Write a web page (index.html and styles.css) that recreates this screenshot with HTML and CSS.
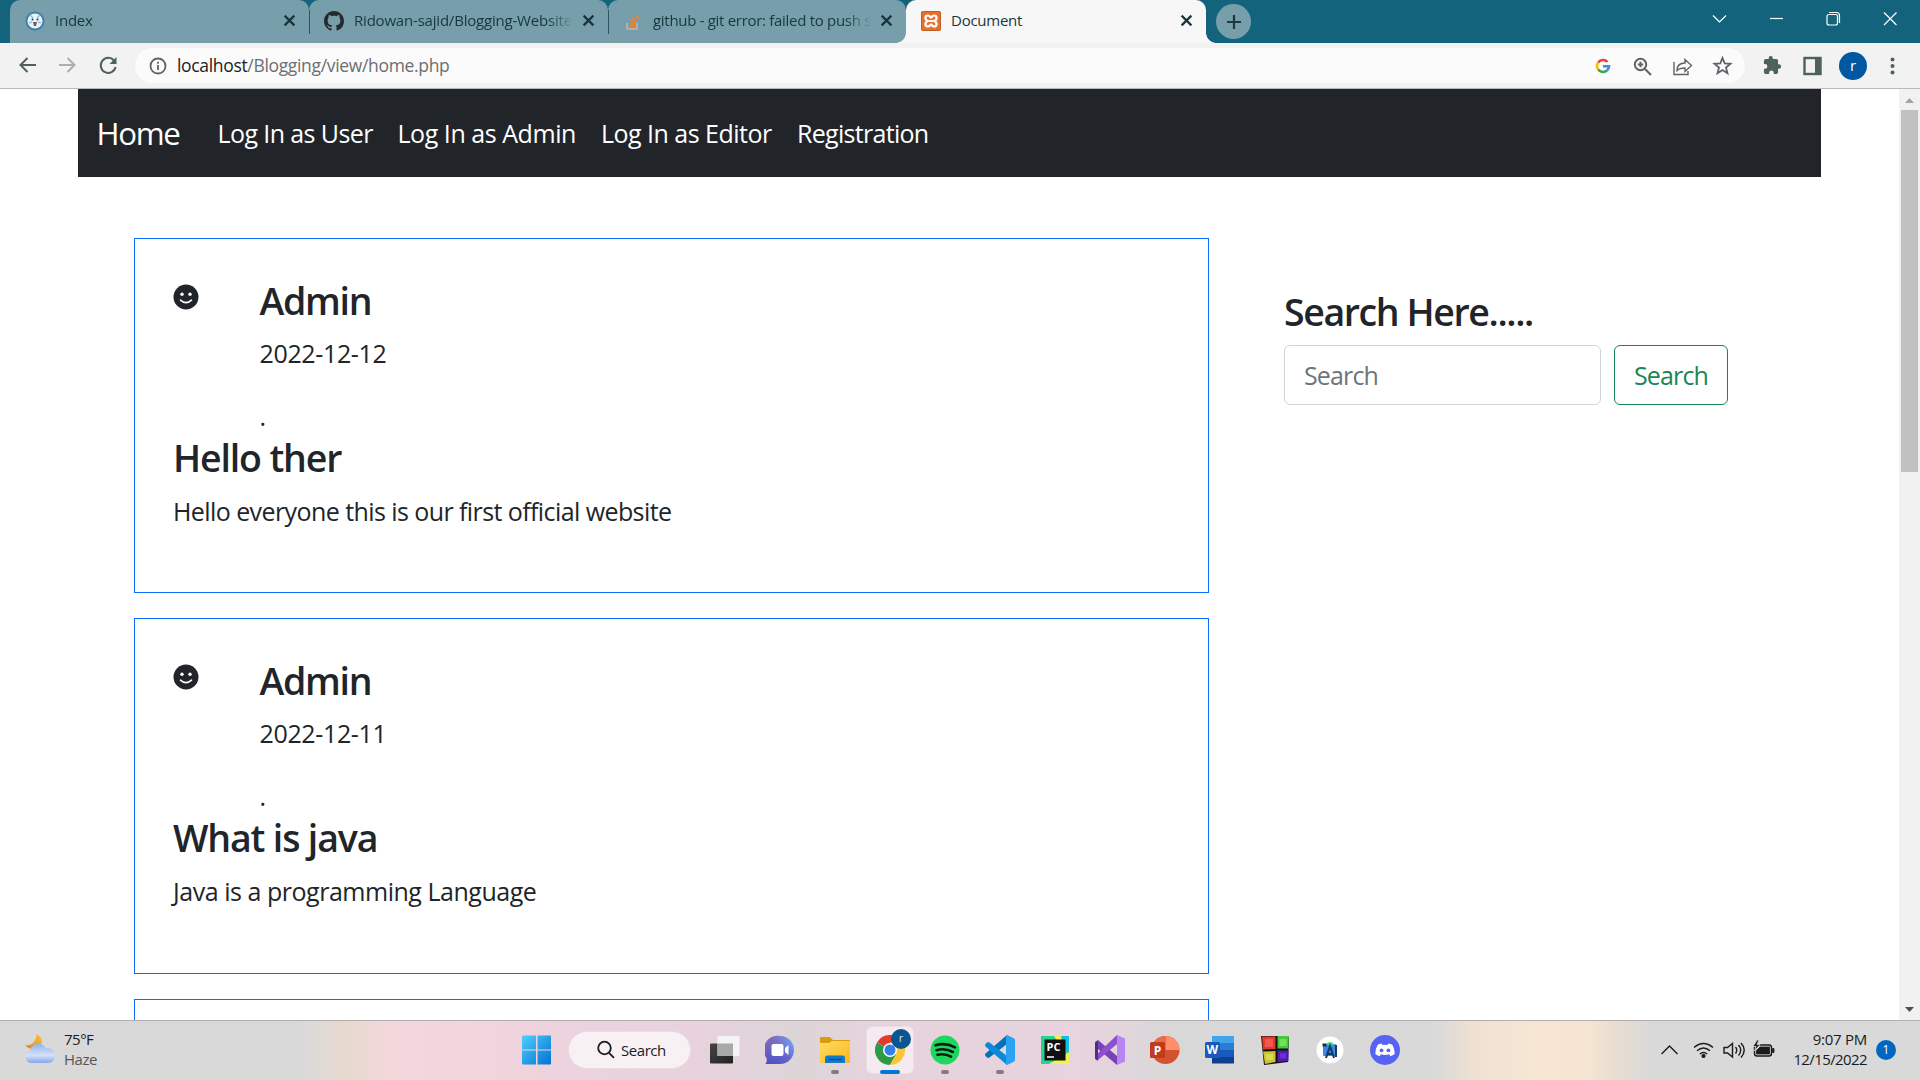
FILE: index.html
```html
<!DOCTYPE html>
<html lang="en">
<head>
<meta charset="utf-8">
<title>Document</title>
<link rel="stylesheet" href="styles.css">
</head>
<body>
<div class="screen">
  <div class="tabstrip">
    <div class="tab tab-first">
      <svg class="favicon" viewBox="0 0 20 20"><circle cx="10" cy="10" r="9.5" fill="#3d7fa8"/><circle cx="10" cy="10" r="7.6" fill="#e8f4fb"/><path d="M5 4l3 3M15 4l-3 3M4 12l3-1M16 12l-3-1" stroke="#8fc4e0" stroke-width="1.5"/><circle cx="7.5" cy="8.5" r="1" fill="#333"/><circle cx="12.5" cy="8.5" r="1" fill="#333"/><path d="M8 11h4l-1 4H9z" fill="#6d5a55"/></svg>
      <span class="tab-title fade t-index">Index</span>
      <svg class="tab-x" viewBox="0 0 12 12"><path d="M1.500 1.500l9 9M10.500 1.500l-9 9"/></svg>
    </div>
    <div class="tab tab-sep">
      <svg class="favicon" viewBox="0 0 16 16"><path fill="#24292f" d="M8 0C3.580 0 0 3.580 0 8c0 3.540 2.290 6.530 5.470 7.590.4.070.55-.17.55-.38 0-.19-.01-.82-.01-1.490-2.010.37-2.530-.49-2.690-.94-.09-.23-.48-.94-.82-1.130-.28-.15-.68-.52-.01-.53.63-.01 1.080.58 1.230.82.720 1.210 1.870.87 2.330.66.070-.52.280-.87.510-1.070-1.780-.2-3.640-.89-3.640-3.950 0-.87.310-1.590.82-2.150-.08-.2-.36-1.020.08-2.120 0 0 .67-.21 2.200.82.640-.18 1.320-.27 2-.27s1.360.09 2 .27c1.530-1.040 2.200-.82 2.200-.82.440 1.100.16 1.920.08 2.120.51.560.82 1.270.82 2.150 0 3.070-1.870 3.750-3.650 3.950.29.250.54.730.54 1.480 0 1.070-.01 1.930-.01 2.200 0 .21.150.46.550.38A8.010 8.010 0 0016 8c0-4.420-3.580-8-8-8z"/></svg>
      <span class="tab-title fade t-repo">Ridowan-sajid/Blogging-Website</span>
      <svg class="tab-x" viewBox="0 0 12 12"><path d="M1.500 1.500l9 9M10.500 1.500l-9 9"/></svg>
    </div>
    <div class="tab tab-sep">
      <svg class="favicon" viewBox="0 0 20 20" fill="none"><path d="M4 12v6h10v-6" stroke="#c3b6ae" stroke-width="1.500"/><path d="M6 15.500h6M6.200 12.500l6 1.200M7 9.300l5.600 2.600M9 6l4.600 4M12 3.500l3.200 5" stroke="#f48024" stroke-width="1.600"/></svg>
      <span class="tab-title fade t-git">github - git error: failed to push s</span>
      <svg class="tab-x" viewBox="0 0 12 12"><path d="M1.500 1.500l9 9M10.500 1.500l-9 9"/></svg>
    </div>
    <div class="tab tab-active">
      <svg class="favicon" viewBox="0 0 20 20"><rect width="20" height="20" rx="2" fill="#e8702a"/><rect x=".5" y=".5" width="19" height="19" rx="2" fill="none" stroke="#b9602a"/><path d="M7.500 10C3 9 4 4.500 7 4.500c2 0 2 2 3 2s1-2 3-2c3 0 4 4.500-.5 5.500 4.500 1 3.500 5.500.5 5.500-2 0-2-2-3-2s-1 2-3 2c-3 0-4-4.500.5-5.500z" fill="none" stroke="#fff" stroke-width="2.200"/><path d="M7.500 10h5" stroke="#fff" stroke-width="2"/></svg>
      <span class="tab-title t-doc">Document</span>
      <svg class="tab-x" viewBox="0 0 12 12"><path d="M1.500 1.500l9 9M10.500 1.500l-9 9"/></svg>
    </div>
    <div class="newtab"><svg width="18" height="18" viewBox="0 0 18 18"><path d="M9 2v14M2 9h14" stroke="#1d3b3f" stroke-width="2.200"/></svg></div>
    <div class="winctl">
      <svg width="57" height="37" viewBox="0 0 57 37"><path d="M22 15.500l6.500 6.500 6.500-6.500"/></svg>
      <svg width="57" height="37" viewBox="0 0 57 37"><path d="M22 18.500h13"/></svg>
      <svg width="57" height="37" viewBox="0 0 57 37"><rect x="22" y="14.500" width="10.500" height="10.500" rx="2"/><path d="M24 12.500h7.500q3 0 3 3V23"/></svg>
      <svg width="57" height="37" viewBox="0 0 57 37"><path d="M22 12.500l12.500 12.500M34.500 12.500L22 25"/></svg>
    </div>
  </div>

  <div class="toolbar">
    <div class="navbtns">
      <svg width="40" height="24" viewBox="0 0 40 24"><path d="M29 12H14M20.500 5l-7 7 7 7"/></svg>
      <svg class="dim" width="40" height="24" viewBox="0 0 40 24"><path d="M12 12h15M20.500 5l7 7-7 7"/></svg>
      <svg width="40" height="24" viewBox="0 0 40 24"><path d="M27 7.500A7.500 7.500 0 1 0 28.600 14"/><path d="M29.500 4v7h-7z" fill="#4c625a" stroke="none"/></svg>
    </div>
    <div class="omnibox">
      <svg class="info" width="18" height="18" viewBox="0 0 18 18"><circle cx="9" cy="9" r="7.500"/><path d="M9 8v5M9 4.800v2"/></svg>
      <span class="url">localhost<span class="path">/Blogging/view/home.php</span></span>
      <div class="omni-icons">
        <svg width="40" height="24" viewBox="0 0 40 24" class="glogo"><path stroke="#ea4335" d="M15.200 8.500A6 6 0 0 1 24.500 8"/><path stroke="#fbbc05" d="M15.200 8.500a6 6 0 0 0 0 7"/><path stroke="#34a853" d="M15.200 15.500a6 6 0 0 0 8.800 1"/><path stroke="#4285f4" d="M24 16.500a6 6 0 0 0 2-4.200h-6"/></svg>
        <svg width="40" height="24" viewBox="0 0 40 24"><circle cx="17.500" cy="10.500" r="5.700"/><path d="M22 15l6 6M14.800 10.500h5.400M17.500 7.800v5.400"/></svg>
        <svg width="40" height="24" viewBox="0 0 40 24" class="thin"><path d="M11 8v12.500h14V17M14 16.500c0-5 3-7.500 8-7.500V5.500l6.500 6-6.500 6V14c-4 0-6 .5-8 2.500z"/></svg>
        <svg width="40" height="24" viewBox="0 0 40 24"><path stroke-width="1.800" d="M19.500 4l2.200 5.400 5.800.4-4.500 3.700 1.500 5.700-5-3.100-5 3.100 1.500-5.700-4.500-3.700 5.800-.4z"/></svg>
      </div>
    </div>
    <div class="ext">
      <svg width="40" height="24" viewBox="0 0 24 24"><path fill="#4c625a" d="M19 11h-1V7c0-1-.9-2-2-2h-4V3.800a2.300 2.300 0 0 0-4.600 0V5H4a2 2 0 0 0-2 2v3.800h1.200a2.700 2.700 0 0 1 0 5.400H2V20c0 1.100.9 2 2 2h3.800v-1.200a2.700 2.700 0 0 1 5.400 0V22H16c1.100 0 2-.9 2-2v-4h1a2.500 2.500 0 0 0 0-5z" transform="translate(2.200 .6) scale(.88)"/></svg>
      <svg width="40" height="24" viewBox="0 0 40 24"><rect x="12.500" y="4" width="16" height="16" fill="none" stroke="#4c625a" stroke-width="2.400"/><path d="M23 4h5.500v16H23z" fill="#4c625a"/></svg>
      <div class="avatar">r</div>
      <svg width="38" height="24" viewBox="0 0 38 24"><g fill="#4c625a"><circle cx="19.500" cy="5.500" r="2"/><circle cx="19.500" cy="12" r="2"/><circle cx="19.500" cy="18.500" r="2"/></g></svg>
    </div>
  </div>

  <div class="viewport">
    <div class="page">
      <nav class="navbar">
        <span class="brand">Home</span>
        <span class="link l1">Log In as User</span>
        <span class="link l2">Log In as Admin</span>
        <span class="link l3">Log In as Editor</span>
        <span class="link l4">Registration</span>
      </nav>
      <div class="columns">
        <main class="posts">
          <article class="card">
            <div class="author">
              <svg class="smile" viewBox="0 0 26 26"><circle cx="13" cy="13" r="12.500" fill="#212529"/><circle cx="9" cy="10.300" r="1.700" fill="#fff"/><circle cx="17" cy="10.300" r="1.700" fill="#fff"/><path d="M7.500 16.200q5.500 5 11 0" fill="none" stroke="#fff" stroke-width="1.600" stroke-linecap="round"/></svg>
              <div><h4 class="h-admin">Admin</h4><p class="date">2022-12-12</p><p class="dot">.</p></div>
            </div>
            <h4 class="h-post">Hello ther</h4>
            <p class="p-hello">Hello everyone this is our first official website</p>
          </article>
          <article class="card card-tall">
            <div class="author">
              <svg class="smile" viewBox="0 0 26 26"><circle cx="13" cy="13" r="12.500" fill="#212529"/><circle cx="9" cy="10.300" r="1.700" fill="#fff"/><circle cx="17" cy="10.300" r="1.700" fill="#fff"/><path d="M7.500 16.200q5.500 5 11 0" fill="none" stroke="#fff" stroke-width="1.600" stroke-linecap="round"/></svg>
              <div><h4 class="h-admin">Admin</h4><p class="date">2022-12-11</p><p class="dot">.</p></div>
            </div>
            <h4 class="h-post">What is java</h4>
            <p class="p-java">Java is a programming Language</p>
          </article>
          <article class="card"></article>
        </main>
        <aside class="side">
          <h4 class="h-search">Search Here.....</h4>
          <div class="form">
            <div class="field"><span class="ls">Search</span></div>
            <div class="btn"><span class="ls">Search</span></div>
          </div>
        </aside>
      </div>
    </div>
    <div class="scrollbar">
      <svg width="21" height="21" viewBox="0 0 21 21"><path d="M6 14l4.500-5 4.500 5z" fill="#a3a3a3"/></svg>
      <div class="thumb"></div>
      <svg class="down" width="21" height="21" viewBox="0 0 21 21"><path d="M6 8l4.500 5L15 8z" fill="#505050"/></svg>
    </div>
  </div>

  <div class="taskbar">
    <div class="weather">
      <svg width="32" height="32" viewBox="0 0 32 32"><defs><linearGradient id="mo" x1="0" y1="1" x2="1" y2="0"><stop offset="0" stop-color="#f07c14"/><stop offset="1" stop-color="#f5c63a"/></linearGradient><linearGradient id="cl" x1="0" y1="0" x2="0" y2="1"><stop offset="0" stop-color="#8fb2ee"/><stop offset=".6" stop-color="#d3e2fb"/><stop offset="1" stop-color="#86a5e6"/></linearGradient></defs><path d="M12.500 1c6 3 7 9 3 13-5 4-12 2-14-2 7 1 11-4 11-11z" fill="url(#mo)"/><path d="M7 30a6.500 6.500 0 0 1-1-12.500C8 10 18 8 22 15.500c5-1 9 2.500 9 7 0 4-3 7.500-7 7.500z" fill="url(#cl)"/></svg>
      <div class="wtext"><span>75°F</span><span class="haze">Haze</span></div>
    </div>
    <div class="apps">
      <svg class="win" width="30" height="30" viewBox="0 0 30 30"><defs><linearGradient id="wg" x1="0" y1="0" x2="1" y2="1"><stop offset="0" stop-color="#4fcfff"/><stop offset="1" stop-color="#0072d0"/></linearGradient></defs><path fill="url(#wg)" d="M1 .5h13v14H0v-13zM15.500.5H28q1 0 1 1v13H15.500zM0 15.500h14v14H1q-1 0-1-1zM15.500 15.500H29v13q0 1-1 1H15.500z"/></svg>
      <div class="searchpill"><svg width="20" height="20" viewBox="0 0 20 20"><circle cx="8.500" cy="8" r="6.300"/><path d="M13 12.800l5 5"/></svg><span>Search</span></div>
      <div class="app"><svg viewBox="0 0 30 30"><defs><linearGradient id="tv" x1="0" y1="0" x2="1" y2="1"><stop offset="0" stop-color="#444"/><stop offset="1" stop-color="#222"/></linearGradient></defs><rect y="8.500" width="23" height="20" rx="1" fill="url(#tv)"/><rect x="7.500" y="1" width="22" height="20" rx="1" fill="#f4f4f4"/><rect x="7.500" y="8.500" width="15.500" height="12.500" fill="#a8a8a8"/></svg></div>
      <div class="app"><svg viewBox="0 0 30 30"><defs><linearGradient id="ch" x1="1" y1="0" x2="0" y2="1"><stop offset="0" stop-color="#7fb4ff"/><stop offset=".5" stop-color="#6566c8"/><stop offset="1" stop-color="#4a49c4"/></linearGradient><linearGradient id="ch2" x1="0" y1="0" x2="1" y2="1"><stop offset="0" stop-color="#9868a8" stop-opacity=".8"/><stop offset=".6" stop-color="#7a6cc0" stop-opacity="0"/></linearGradient></defs><path d="M15 1a14 14 0 0 1 0 28H.500q2-3 1-6A14 14 0 0 1 15 1z" fill="url(#ch)"/><path d="M15 1a14 14 0 0 1 0 28H.500q2-3 1-6A14 14 0 0 1 15 1z" fill="url(#ch2)"/><rect x="6.500" y="9" width="12" height="12" rx="2" fill="#fff"/><path d="M20 13l3.500-3v10L20 17z" fill="#fff"/></svg></div>
      <div class="app"><svg viewBox="0 0 30 30"><defs><linearGradient id="fo" x1="0" y1="0" x2="1" y2="1"><stop offset="0" stop-color="#ffdc6a"/><stop offset="1" stop-color="#fbb814"/></linearGradient></defs><path d="M0 3q0-1 1-1h9l3 3h17v6H0z" fill="#dc9a10"/><path d="M0 8h9l3-2h18v21q0 1-1 1H1q-1 0-1-1z" fill="url(#fo)"/><path d="M5 28v-5q0-2.500 2.500-2.500h15q2.500 0 2.500 2.500v5z" fill="#1279cb"/><path d="M8.500 24.500h13" stroke="#0a4f91" stroke-width="1.500"/></svg><i class="run"></i></div>
      <div class="app active"><svg viewBox="0 0 30 30"><circle cx="15" cy="15" r="15" fill="#fff"/><path d="M15 15L2 7.500A15 15 0 0 1 28 7.500H15z" fill="#e33b2e"/><path d="M15 15L2 7.500A15 15 0 0 0 15 30l6.500-11.200z" fill="#2c9a47"/><path d="M28 7.500H15L21.500 18.800 15 30A15 15 0 0 0 28 7.500z" fill="#fbc52d"/><circle cx="15" cy="15" r="7" fill="#fff"/><circle cx="15" cy="15" r="5.500" fill="#357de8"/></svg><b class="mini">r</b><i class="run wide"></i></div>
      <div class="app"><svg viewBox="0 0 30 30"><circle cx="15" cy="15" r="14.500" fill="#1ed75f"/><path d="M5.500 10.300q10-3 19.500 2M6.500 15.200q8.500-2.500 16.500 1.800M7.500 19.800q7-1.800 13.500 1.800" fill="none" stroke="#0c1c10" stroke-width="2.600" stroke-linecap="round"/></svg><i class="run"></i></div>
      <div class="app"><svg viewBox="0 0 30 30"><path d="M22 0v9L4.500 22.500Q3 23.500 1.500 22L.5 21q-1-1.300 0-2.500z" fill="#0572bb"/><path d="M22 30v-9L4.500 7.500Q3 6.500 1.500 8L.5 9q-1 1.300 0 2.500z" fill="#0a8ad8"/><path d="M22 0l6.800 3.200q1.200.7 1.200 2v19.600q0 1.300-1.200 2L22 30q-1 0-1-2V2q0-2 1-2z" fill="#2aa4f2"/></svg><i class="run"></i></div>
      <div class="app"><svg viewBox="0 0 30 30"><rect x="1" y="1" width="28" height="28" fill="#28d391"/><path d="M16 1h13v18z" fill="#12bfe0"/><path d="M14 1l7-.5 2 14z" fill="#f5ef4e"/><path d="M29 17v12H9z" fill="#edf44c"/><rect x="4.500" y="4.500" width="21" height="21" fill="#101010"/><path d="M7 22h7" stroke="#fff" stroke-width="1.500"/><text x="6.500" y="15.500" class="pc">PC</text></svg></div>
      <div class="app"><svg viewBox="0 0 30 30"><path d="M0 7l3-2 19 16v9L3 14v12l-3-2z" fill="#7b3fb8"/><path d="M3 25L0 23.500V21L22 0v9z" fill="#8e4fd0"/><path d="M0 7.500L3 6v19l-3-1.500z" fill="#522d86"/><path d="M22 0l8 3.500v23L22 30z" fill="#b886f3"/></svg></div>
      <div class="app"><svg viewBox="0 0 30 30"><circle cx="15.500" cy="15" r="14" fill="#d35230"/><path d="M15.500 1a14 14 0 0 1 14 14h-14z" fill="#ff8f6b"/><path d="M15.500 1v14h-14A14 14 0 0 1 15.500 1z" fill="#ed6c47"/><rect y="7" width="15" height="16" rx="1.500" fill="#c13b1b"/><text x="3.700" y="19.500" class="ms">P</text></svg></div>
      <div class="app"><svg viewBox="0 0 30 30"><rect x="7" y="1" width="22" height="8" fill="#41a5ee"/><rect x="7" y="8" width="22" height="7" fill="#2b7cd3"/><rect x="7" y="15" width="22" height="7" fill="#185abd"/><rect x="7" y="22" width="22" height="6.500" fill="#103f91"/><rect y="7" width="15" height="16" rx="1.500" fill="#185abd"/><text x="1.500" y="19" class="ms">W</text></svg></div>
      <div class="app"><svg viewBox="0 0 30 30"><path d="M1 1h28l-1 26-24 3z" fill="#111"/><path d="M2 1.500h13.500v12.500L3 14.500z" fill="#e2392d"/><path d="M5 4h8v8H5z" fill="#f2584c"/><path d="M17.500 1H29l-1 12.500H17.500z" fill="#45ca35"/><path d="M19.500 4h7v7h-7z" fill="#6ee05c"/><path d="M3 16.500L15.500 16v11L5 29z" fill="#c9c533"/><path d="M6 19h7v6H6z" fill="#ddd94c"/><path d="M17.500 15.500H28.500V26l-11 1z" fill="#541aab"/><path d="M20 18h6v5.500h-6z" fill="#6a2fd0"/></svg></div>
      <div class="app"><svg viewBox="0 0 30 30"><circle cx="15" cy="15" r="13.500" fill="#fff"/><rect x="8" y="9" width="13" height="12" rx="1" fill="#3b86f0"/><path d="M10 10q5-6 10 0z" fill="#3ddc84"/><path d="M7.500 8.500h4v3h-4z" fill="#17303f"/><path d="M11 23l4-12 4 12M12.500 19h5M21 10v12" fill="none" stroke="#123a5e" stroke-width="2"/></svg></div>
      <div class="app"><svg viewBox="0 0 30 30"><circle cx="15" cy="15" r="15" fill="#5663f3"/><path d="M11.500 8.500l1 1.500q2.500-.5 5 0l1-1.500q2 .3 3.800 1.300 2.700 4.500 2.400 9.200-2 1.600-4.300 2.200l-1.200-1.900q-4.200 1.200-8.400 0l-1.200 1.900Q7.300 20.600 5.300 19q-.3-4.700 2.400-9.200 1.800-1 3.800-1.300z" fill="#fff"/><circle cx="11.600" cy="15.300" r="1.900" fill="#5663f3"/><circle cx="18.400" cy="15.300" r="1.900" fill="#5663f3"/></svg></div>
    </div>
    <div class="tray">
      <svg width="34" height="24" viewBox="0 0 34 24"><path d="M8.500 16l8-8 8 8"/></svg>
      <svg class="wifi" width="32" height="24" viewBox="0 0 32 24"><path d="M7 9.500q9.500-8 19 0M10 12.800q6.500-5.500 13 0M12.800 16q3.700-3 7.400 0"/><circle cx="16.500" cy="18" r="1.400" fill="#1b1b1b"/></svg>
      <svg width="30" height="24" viewBox="0 0 30 24"><path d="M5 9.500h3.500l5-4v13.500l-5-4H5zM16.500 9q2.500 3 0 6.500M19.500 7q4.500 5 0 10.500M22 5q6.500 7 0 14.500"/></svg>
      <svg width="30" height="24" viewBox="0 0 30 24"><rect x="5.500" y="7" width="17" height="11" rx="2.500"/><path d="M7.500 15.500v-3L11 9h9.500v7h-13zM23.500 10.500h1.500v4h-1.500z" fill="#1b1b1b" stroke-width=".8"/><path d="M8 2L4 8.500h3L5.500 13l5.500-6.500H8L10 2z" fill="#1b1b1b" stroke="#d9d9d9" stroke-width=".8"/></svg>
      <div class="clock"><span class="time">9:07 PM</span><span class="cdate">12/15/2022</span></div>
      <div class="badge">1</div>
    </div>
  </div>
</div>
</body>
</html>
```
FILE: styles.css
```css
* { box-sizing: border-box; }
body { margin: 0; font-family: "Open Sans", "Noto Sans", sans-serif; background: #fff; color: #212529; }
.screen { width: 1920px; height: 1080px; display: flex; flex-direction: column; overflow: hidden; }
svg { display: block; flex: none; }

/* Browser tabs */
.tabstrip { height: 43px; flex: none; display: flex; background: #14637d; padding-left: 10px; }
.tab { width: 299px; height: 43px; display: flex; align-items: center; padding: 0 13px 2px 15px; background: #779eab; border-radius: 10px 10px 0 0; position: relative; }
.tab:nth-child(3) { width: 298px; }
.tab-sep::before { content: ""; position: absolute; left: 0; top: 10px; width: 1px; height: 24px; background: #2c5560; }
.tab-active { width: 300px; background: #f7f7f7; }
.tab-active::after, .tab-active::before { content: ""; position: absolute; bottom: 0; width: 10px; height: 10px; }
.tab-active::after { left: 100%; background: radial-gradient(circle at 100% 0, #14637d 9.500px, #f5f5f5 10px); }
.tab-active::before { right: 100%; background: radial-gradient(circle at 0 0, #779eab 9.500px, #f5f5f5 10px); }
.favicon { width: 20px; height: 20px; }
.tab-title { flex: 1; margin: -1px 8px 0 10px; font-size: 15px; line-height: 20px; white-space: nowrap; overflow: hidden; color: #17383d; letter-spacing: -.25px; }
.t-repo { letter-spacing: -.2px; }
.t-git { letter-spacing: -.3px; }
.fade { -webkit-mask-image: linear-gradient(90deg, #000 88%, transparent); mask-image: linear-gradient(90deg, #000 88%, transparent); }
.tab-x { width: 13px; height: 13px; stroke: #173539; stroke-width: 2; fill: none; }
.newtab { width: 35px; height: 35px; margin: 4px 0 0 10px; border-radius: 50%; background: #779eab; display: flex; align-items: center; justify-content: center; }
.winctl { margin-left: auto; display: flex; padding-right: 1px; }
.winctl svg { fill: none; stroke: #fff; stroke-width: 1.2; }

/* Address bar */
.toolbar { height: 46px; flex: none; display: flex; align-items: center; background: #f2f2f2; border-bottom: 1px solid #b9b9b9; padding-left: 7px; }
.navbtns { display: flex; width: 128px; flex: none; margin-top: -1px; }
.navbtns svg { fill: none; stroke: #4c625a; stroke-width: 2; }
.navbtns .dim { stroke: #a8b0ae; }
.omnibox { width: 1610px; height: 35px; border-radius: 18px; background: #fbfbfb; display: flex; align-items: center; padding-left: 14px; }
.info { fill: none; stroke: #5f6368; stroke-width: 1.8; }
.url { margin: -1px 0 0 10px; font-size: 17.5px; line-height: 24px; color: #202124; letter-spacing: -.33px; }
.path { color: #6c6e71; }
.omni-icons { margin-left: auto; display: flex; padding-right: 2px; }
.omni-icons svg { fill: none; stroke: #5f6368; stroke-width: 2; }
.omni-icons .thin { stroke-width: 1.4; }
.omni-icons .glogo { stroke-width: 2.6; }
.ext { display: flex; align-items: center; padding-left: 7px; }
.avatar { width: 28px; height: 28px; margin: 0 1px 0 7px; border-radius: 50%; background: #0058a0; color: #fff; font-size: 15px; line-height: 26px; text-align: center; }
.ext .avatar + svg { margin-left: 5px; }

/* Blog page */
.viewport { height: 931px; flex: none; display: flex; overflow: hidden; }
.page { width: 1899px; padding-left: 78px; }
.navbar { width: 1743px; height: 88px; background: #212529; color: #fff; display: flex; align-items: center; padding-left: 18.5px; white-space: nowrap; }
.brand { width: 121px; font-size: 31.25px; line-height: 46px; letter-spacing: -1.3px; }
.link { font-size: 25px; line-height: 38px; letter-spacing: -.6px; }
.l1 { width: 180px; }
.l2 { width: 203.5px; letter-spacing: -.45px; }
.l3 { width: 196px; letter-spacing: -.52px; }
.l4 { letter-spacing: -.7px; }
.columns { display: flex; padding-left: 56px; }
.posts { width: 1075px; padding-top: 61px; display: flex; flex-direction: column; gap: 25px; }
.card { height: 355px; flex: none; border: 1px solid #0d6efd; padding: 38.5px 38px; }
.card-tall { height: 356px; }
.author { display: flex; }
.smile { width: 26px; height: 26px; margin: 6px 61px 0 -.5px; }
h4 { margin: 0 0 12.5px; font-size: 37.5px; font-weight: 600; line-height: 45px; white-space: nowrap; }
.h-admin { letter-spacing: -1.3px; }
.h-post { letter-spacing: -1.15px; }
.h-search { letter-spacing: -1.4px; }
p { margin: 0; font-size: 25px; line-height: 37.5px; white-space: nowrap; }
.p-hello { letter-spacing: -.58px; }
.p-java { letter-spacing: -.47px; }
.date { margin-bottom: 25px; letter-spacing: -.35px; }
.side { margin-left: 75px; padding-top: 112px; }
.side h4 { margin-bottom: 11px; }
.form { display: flex; gap: 13px; }
.field, .btn { height: 60px; border: 1px solid #ced4da; border-radius: 6px; font-size: 25px; line-height: 58px; letter-spacing: -.85px; }
.field { width: 317px; padding-left: 19px; color: #6c757d; }
.btn { width: 114px; padding-left: 19px; border-color: #198754; color: #198754; }
.scrollbar { width: 21px; background: #f1f1f1; display: flex; flex-direction: column; }
.thumb { width: 17px; height: 362px; margin-left: 2px; background: #c1c1c1; }
.down { margin-top: auto; }

/* Desktop taskbar */
.taskbar { height: 60px; flex: none; display: flex; align-items: center; position: relative; border-top: 1px solid #b3adb0; color: #1b1b1b;
  background: linear-gradient(90deg, #d9d9d9 0, #d9d9d9 300px, #e7d9cf 345px, #f4d7dc 400px, #f1d4dd 490px, #ead2de 600px, #e8d2dd 700px, #dcd5d8 800px, #e7d3dc 880px, #e8d3de 1080px, #d9d8d9 1170px, #d9d9d9 1435px, #efe1d2 1472px, #f7e6d4 1540px, #f5e4d2 1590px, #e6dcd2 1620px, #d9d9d9 1650px); }
.weather { display: flex; width: 522px; padding-left: 24px; flex: none; }
.wtext { display: flex; flex-direction: column; margin-left: 8px; font-size: 15px; line-height: 20px; letter-spacing: -.5px; margin-top: -4px; }
.haze { color: #555; }
.apps { display: flex; align-items: center; margin-top: -1px; }
.searchpill { width: 123px; height: 38px; margin: 0 6px 0 16px; border-radius: 19px; background: #f8f1f4; border: 1px solid #e8dde2; display: flex; align-items: center; padding-left: 27px; font-size: 15px; letter-spacing: -.45px; }
.searchpill svg { fill: none; stroke: #1b1b1b; stroke-width: 1.8; margin-right: 5px; }
.searchpill span { margin-top: -1px; }
.app { width: 48px; height: 48px; margin-right: 7px; border-radius: 6px; display: flex; align-items: center; justify-content: center; position: relative; }
.searchpill + .app { margin-left: 4px; }
.app svg { width: 30px; height: 30px; }
.active { background: #f5eaef; border: 1px solid #eadfe4; }
.run { position: absolute; bottom: 0; left: 20px; width: 8px; height: 4px; border-radius: 2px; background: #857b80; }
.wide { left: 13px; width: 20px; background: #0078d4; bottom: -1px; }
.mini { position: absolute; left: 24px; top: 2px; width: 20px; height: 20px; border-radius: 50%; background: #0b5593; color: #cfe0ee; font: 11px/18px "Open Sans", sans-serif; text-align: center; }
.pc { font: bold 11px "Open Sans", sans-serif; fill: #fff; }
.ms { font: bold 12px "Open Sans", sans-serif; fill: #fff; }
.tray { margin: -1px 0 0 auto; display: flex; align-items: center; padding-right: 24px; }
.tray svg { fill: none; stroke: #1b1b1b; stroke-width: 1.4; }
.clock { width: 88px; display: flex; flex-direction: column; align-items: flex-end; font-size: 15px; line-height: 20px; margin-top: -2px; }
.time { letter-spacing: -.25px; }
.cdate { letter-spacing: -.6px; }
.badge { width: 20px; height: 20px; margin-left: 9px; border-radius: 50%; background: #0067c0; color: #fff; font-size: 12px; line-height: 20px; text-align: center; }
```
